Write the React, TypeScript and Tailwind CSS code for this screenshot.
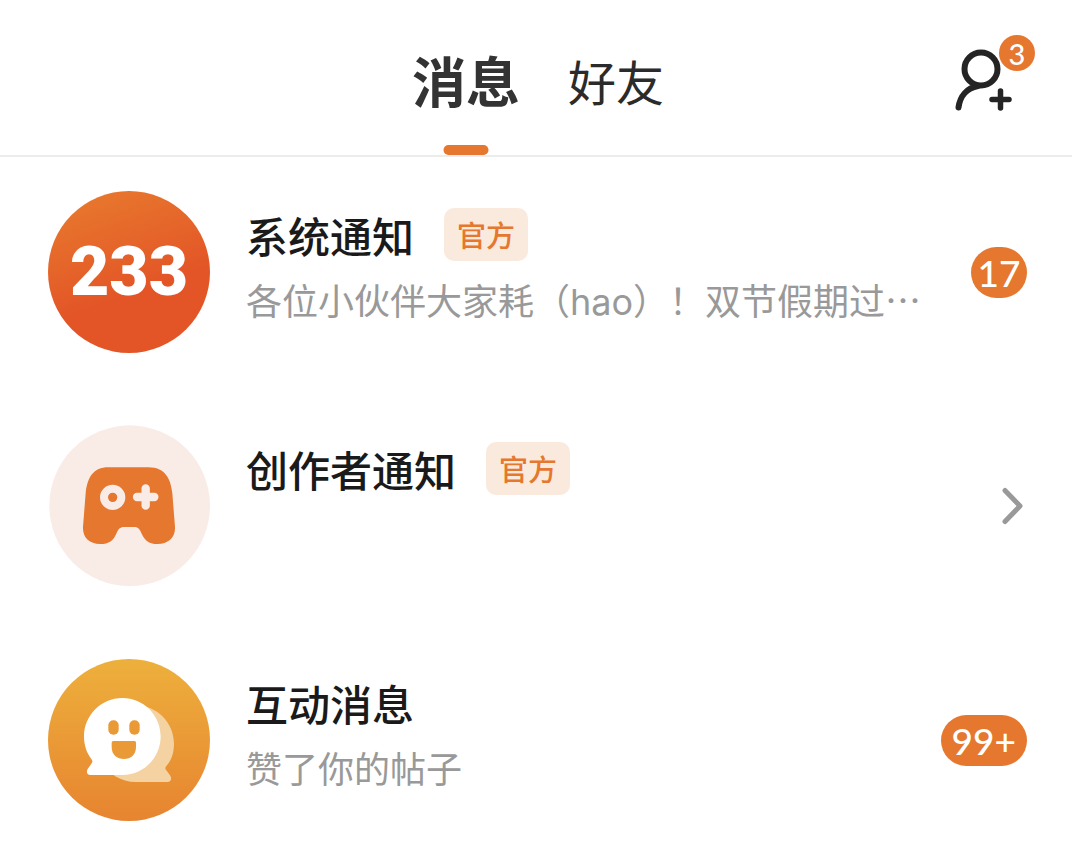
import type { ReactNode } from "react";
import clsx from "clsx";

function AddFriendIcon() {
  return (
    <svg viewBox="0 0 62 66" className="h-[66px] w-[62px]" fill="none" stroke="#242424" strokeLinecap="round" aria-hidden="true">
      <circle cx="29" cy="22" r="16.5" strokeWidth="6" />
      <path d="M26 39C15 41 8 49 6.500 60.500" strokeWidth="6" />
      <path d="M40 52.500H57M48.500 44V61" strokeWidth="5.500" />
    </svg>
  );
}

function SystemLogo() {
  return (
    <div className="flex size-[162px] shrink-0 items-center justify-center rounded-full bg-linear-160 from-[#e87c2e] via-[#e35527] via-60% to-[#e35527]">
      <span className="font-[Roboto,sans-serif] text-[68px] leading-none font-black text-white">233</span>
    </div>
  );
}

function CreatorLogo() {
  return (
    <svg viewBox="24 30 486 486" className="size-[162px] shrink-0" aria-hidden="true">
      <circle cx="269" cy="272" r="241" fill="#f9ece7" />
      <path
        fill="#e5772f"
        d="M205 157H325C375 157 392 190 397 235L405 335C407 368 385 387 352 387C325 387 314 375 305 356C298 340 293 336 282 336H252C240 336 235 342 229 356C220 376 208 387 180 387C148 387 127 368 129 335L137 235C142 187 160 157 205 157Z"
      />
      <circle cx="218" cy="247" r="26" fill="none" stroke="#f9ece7" strokeWidth="24" />
      <path d="M291 246H343M317 220V272" stroke="#f9ece7" strokeWidth="25" strokeLinecap="round" />
    </svg>
  );
}

function ChatLogo() {
  return (
    <svg viewBox="24 27 486 486" className="size-[162px] shrink-0" aria-hidden="true">
      <defs>
        <linearGradient id="chat-bg" x1="0" y1="0" x2="0" y2="1">
          <stop offset="0" stopColor="#edb03c" />
          <stop offset="1" stopColor="#e78430" />
        </linearGradient>
      </defs>
      <circle cx="267" cy="270" r="243" fill="url(#chat-bg)" />
      <path
        fill="#f4d2a2"
        d="M287 166C350 166 402 218 402 281C402 308 394 332 379 348C375 353 375 356 379 361L391 377C396 386 393 396 383 396H287C223 396 172 345 172 281C172 218 223 166 287 166Z"
      />
      <path
        fill="#fff"
        d="M247 144C311 144 362 196 362 259C362 323 311 375 247 375H151C141 375 138 366 143 357L155 340C158 335 158 332 154 327C140 309 132 286 132 259C132 196 184 144 247 144Z"
      />
      <g fill="#e99a36">
        <rect x="205" y="211" width="31" height="43" rx="15" />
        <rect x="268" y="211" width="31" height="43" rx="15" />
        <path d="M220 273H284Q288 273 288 278V291C288 315 272 327 252 327C231 327 215 315 215 291V278Q215 273 220 273Z" />
      </g>
    </svg>
  );
}

function CountBadge({ count }: { count: number }) {
  const overflow = count > 99;
  return (
    <span
      className={clsx(
        "flex h-[51px] items-center justify-center rounded-full bg-[#e5772f] font-[Lato,sans-serif] text-[37px] leading-none font-medium text-white",
        overflow ? "px-[11px]" : "w-14",
      )}
    >
      {overflow ? "99+" : count}
    </span>
  );
}

function Chevron() {
  return (
    <svg viewBox="0 0 24 38" className="mr-[3px] h-[38px] w-6" fill="none" stroke="#999" strokeWidth="5" strokeLinecap="round" strokeLinejoin="round" aria-hidden="true">
      <path d="M5 3.500L20 19L5 34.500" />
    </svg>
  );
}

interface RowProps {
  icon: ReactNode;
  title: string;
  official?: boolean;
  preview?: ReactNode;
  trailing: ReactNode;
}

function MessageRow({ icon, title, official, preview, trailing }: RowProps) {
  return (
    <li>
      <a href="#" className="flex items-center gap-9 pr-[45px] pl-12">
        {icon}
        <div className="min-w-0 flex-1 self-start pt-[17px]">
          <div className="flex h-[53px] items-center gap-[30px]">
            <h2 className="text-[42px] leading-[53px] font-medium text-[#1a1a1a]">{title}</h2>
            {official && (
              <span className="flex h-[53px] items-center rounded-[10px] bg-[#faeadd] px-[13px] text-[29px] font-medium text-[#e5772f]">
                官方
              </span>
            )}
          </div>
          {preview && <p className="mt-[11px] truncate text-[36px] leading-[54px] text-[#999]">{preview}</p>}
        </div>
        {trailing}
      </a>
    </li>
  );
}

export default function App() {
  return (
    <div className="min-h-screen bg-white pb-9 font-['Noto_Sans_CJK_SC',sans-serif]">
      <header className="grid h-[157px] grid-cols-[1fr_auto_1fr] border-b-2 border-[#ececec]">
        <nav className="col-start-2 flex gap-12 pl-1">
          <button type="button" className="relative pt-1 text-[54px] font-bold text-[#333]">
            消息
            <span className="absolute bottom-0 left-1/2 h-[10px] w-[45px] -translate-x-1/2 rounded-full bg-[#e5772f]" />
          </button>
          <button type="button" className="pt-1 text-[48px] text-[#2b2b2b]">
            好友
          </button>
        </nav>
        <button type="button" aria-label="添加好友" className="relative mt-[47px] mr-[58px] self-start justify-self-end">
          <AddFriendIcon />
          <span className="absolute -top-3 -right-[21px] flex size-9 items-center justify-center rounded-full bg-[#e5772f] font-[Lato,sans-serif] text-[29px] leading-none font-medium text-white">
            3
          </span>
        </button>
      </header>
      <ul className="flex flex-col gap-[72px] pt-[34px]">
        <MessageRow
          icon={<SystemLogo />}
          title="系统通知"
          official
          preview={
            <>
              各位小伙伴大家耗（<span className="font-[Inter,sans-serif]">hao</span>）！双节假期过…
            </>
          }
          trailing={<CountBadge count={17} />}
        />
        <MessageRow icon={<CreatorLogo />} title="创作者通知" official trailing={<Chevron />} />
        <MessageRow icon={<ChatLogo />} title="互动消息" preview="赞了你的帖子" trailing={<CountBadge count={100} />} />
      </ul>
    </div>
  );
}
